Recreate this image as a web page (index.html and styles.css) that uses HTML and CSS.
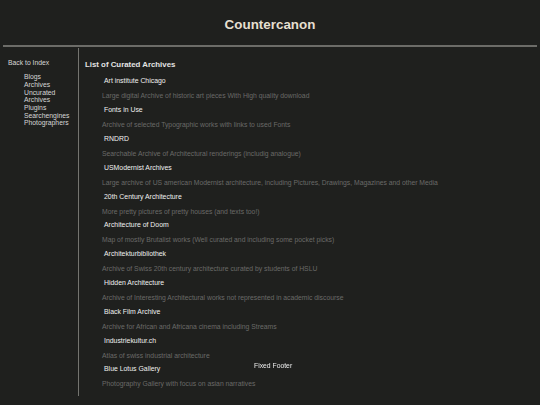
FILE: index.html
```html
<!DOCTYPE html>
<html>
	<head>
		<meta charset="UTF-8">
		<title>Countercanon</title>
		<link rel="stylesheet" href="styles.css">
	</head>
	<body>
		<div class="header">
			<h1>Countercanon</h1>
		</div>
		<hr class="rule">
		<div class="page">
			<div class="sidebar">
				<a href="#" class="back">Back to Index</a>
				<ul class="nav">
					<li><a href="#">Blogs</a></li>
					<li><a href="#">Archives</a></li>
					<li><a href="#">Uncurated<br>Archives</a></li>
					<li><a href="#">Plugins</a></li>
					<li><a href="#">Searchengines</a></li>
					<li><a href="#">Photographers</a></li>
				</ul>
			</div>
			<div class="main">
				<h2>List of Curated Archives</h2>
				<ul class="archives">
					<li><a href="#">Art institute Chicago</a><p>Large digital Archive of historic art pieces With High quality download</p></li>
					<li><a href="#">Fonts in Use</a><p>Archive of selected Typographic works with links to used Fonts</p></li>
					<li><a href="#">RNDRD</a><p>Searchable Archive of Architectural renderings (includig analogue)</p></li>
					<li><a href="#">USModernist Archives</a><p>Large archive of US american Modernist architecture, including Pictures, Drawings, Magazines and other Media</p></li>
					<li><a href="#">20th Century Architecture</a><p>More pretty pictures of pretty houses (and texts too!)</p></li>
					<li><a href="#">Architecture of Doom</a><p>Map of mostly Brutalist works (Well curated and including some pocket picks)</p></li>
					<li><a href="#">Architekturbibliothek</a><p>Archive of Swiss 20th century architecture curated by students of HSLU</p></li>
					<li><a href="#">Hidden Architecture</a><p>Archive of Interesting Architectural works not represented in academic discourse</p></li>
					<li><a href="#">Black Film Archive</a><p>Archive for African and Africana cinema including Streams</p></li>
					<li><a href="#">Industriekultur.ch</a><p>Atlas of swiss industrial architecture</p></li>
					<li><a href="#">Blue Lotus Gallery</a><p>Photography Gallery with focus on asian narratives</p></li>
				</ul>
			</div>
		</div>
		<div class="footer">Fixed Footer</div>
	</body>
</html>
```

FILE: styles.css
```css
*,
*::before,
*::after{
	box-sizing: border-box;
}
body{
	margin: 0;
	background: #1f201e;
	color: #dcdcdc;
	font-family: "Liberation Sans", Arial, sans-serif;
	font-size: 6.8px;
}
a{
	color: inherit;
	text-decoration: none;
}
.header{
	padding-top: 16.7px;
	height: 45px;
	text-align: center;
}
.header h1{
	margin: 0;
	font-size: 13.4px;
	color: #e6dfd0;
}
.rule{
	margin: 0 3px;
	border: none;
	border-top: 2px solid #6c6c68;
	height: 0;
}
.page{
	display: flex;
	padding-top: 1px;
}
.sidebar{
	width: 79px;
	padding: 10.5px 0 0 8px;
	border-right: 1px solid #74746f;
	color: #d6d6d6;
	line-height: 7.7px;
}
.sidebar .back{
	display: block;
}
.sidebar .nav{
	list-style: none;
	margin: 7px 0 0;
	padding-left: 16px;
}
.main{
	flex: 1;
	padding: 12px 0 5px 6px;
}
.main h2{
	margin: 0 0 5.4px;
	font-size: 7.85px;
	color: #e4e4e4;
}
.archives{
	list-style: none;
	margin: 0;
	padding-left: 17px;
}
.archives a{
	display: block;
	padding-left: 2px;
	line-height: 14px;
	font-size: 6.9px;
	color: #f0f0f0;
}
.archives p{
	margin: 0;
	padding-top: 1px;
	line-height: 13.8px;
	color: #6a6a68;
}
.footer{
	position: fixed;
	left: 254px;
	top: 362px;
	color: #ececec;
}
```
